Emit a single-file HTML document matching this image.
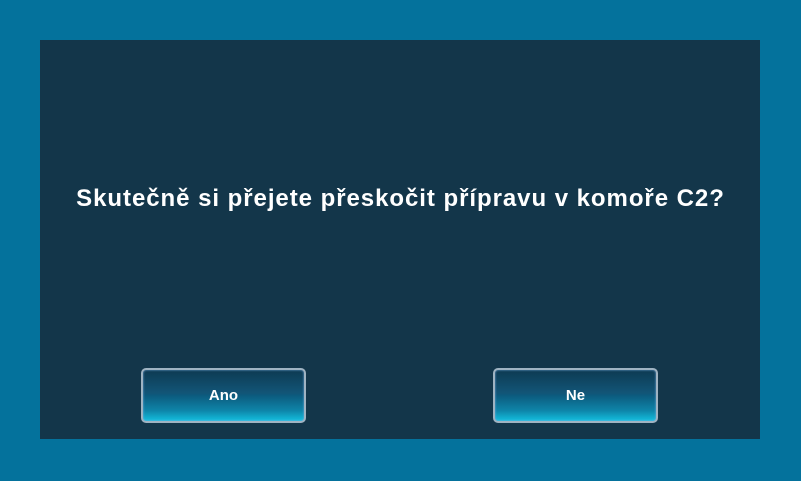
<!DOCTYPE html>
<html><head><meta charset="utf-8"><style>
html,body{margin:0;padding:0;width:801px;height:481px;background:#04729c;overflow:hidden}
.panel{position:absolute;left:40px;top:40px;width:720px;height:399px;background:#13364a}
.t{position:absolute;left:0;top:185px;width:801px;text-align:center;color:#fff;font:bold 24px "Liberation Sans",sans-serif;letter-spacing:0.95px;white-space:nowrap}
.b{position:absolute;top:368px;width:161px;height:51px;border:2px solid #9fb3c2;border-radius:5px;
background:linear-gradient(#0d3a52 0%,#125577 45%,#0c5b7e 50%,#0e86aa 80%,#13c0df 100%);
color:#fff;font:bold 15px "Liberation Sans",sans-serif;text-align:center;line-height:51px;box-shadow:inset 0 0 2px #7ad}
</style></head><body>
<div class="panel"></div>
<div class="t">Skutečně si přejete přeskočit přípravu v komoře C2?</div>
<div class="b" style="left:141px">Ano</div>
<div class="b" style="left:493px">Ne</div>
</body></html>
